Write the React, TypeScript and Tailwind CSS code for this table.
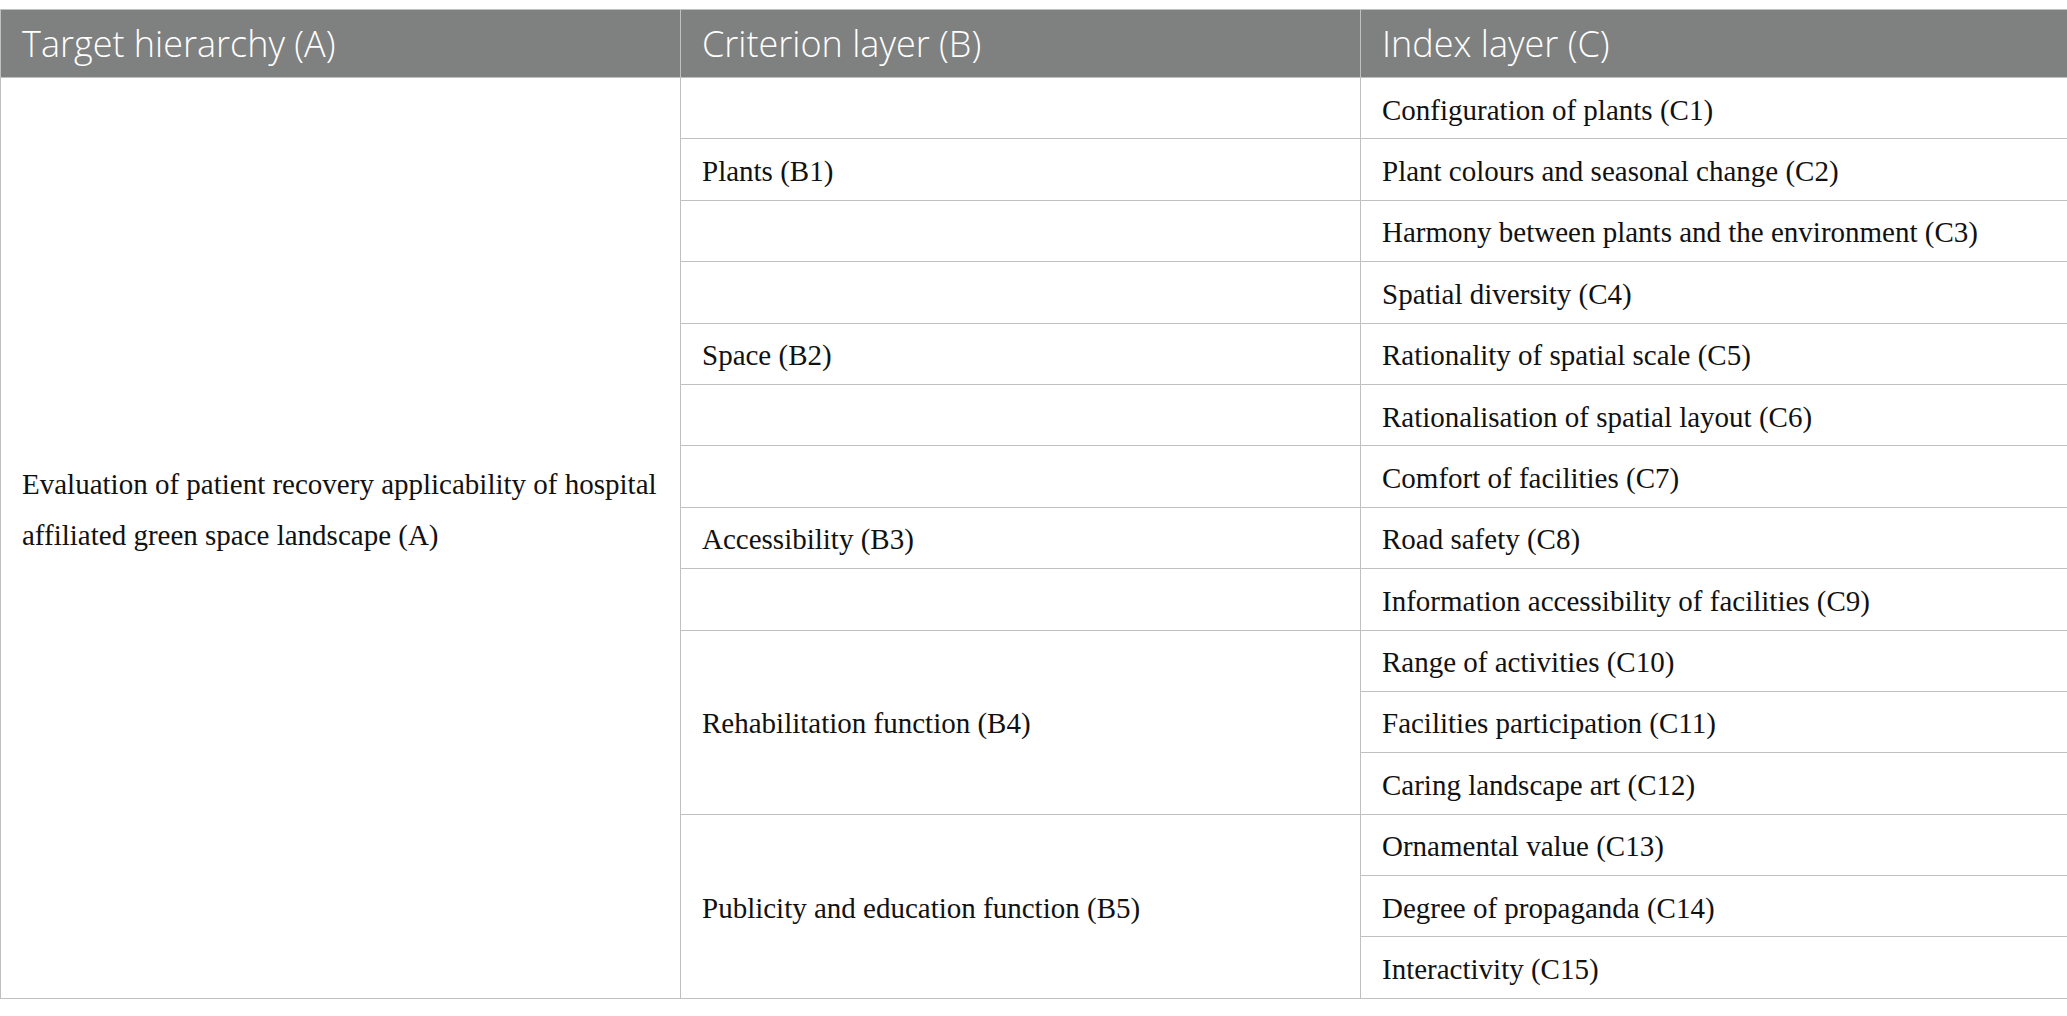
const rows: { b?: string; bSpan?: number; skipB?: boolean; c: string }[] = [
  { b: '', c: 'Configuration of plants (C1)' },
  { b: 'Plants (B1)', c: 'Plant colours and seasonal change (C2)' },
  { b: '', c: 'Harmony between plants and the environment (C3)' },
  { b: '', c: 'Spatial diversity (C4)' },
  { b: 'Space (B2)', c: 'Rationality of spatial scale (C5)' },
  { b: '', c: 'Rationalisation of spatial layout (C6)' },
  { b: '', c: 'Comfort of facilities (C7)' },
  { b: 'Accessibility (B3)', c: 'Road safety (C8)' },
  { b: '', c: 'Information accessibility of facilities (C9)' },
  { b: 'Rehabilitation function (B4)', bSpan: 3, c: 'Range of activities (C10)' },
  { skipB: true, c: 'Facilities participation (C11)' },
  { skipB: true, c: 'Caring landscape art (C12)' },
  { b: 'Publicity and education function (B5)', bSpan: 3, c: 'Ornamental value (C13)' },
  { skipB: true, c: 'Degree of propaganda (C14)' },
  { skipB: true, c: 'Interactivity (C15)' },
];

const serif = "font-['Liberation_Serif',_'Times_New_Roman',serif]";

export default function App() {
  return (
    <div className="min-h-screen bg-white pt-[9px]">
      <table className="w-[2067px] table-fixed border-collapse">
        <colgroup>
          <col className="w-[680px]" />
          <col className="w-[680px]" />
          <col className="w-[707px]" />
        </colgroup>
        <thead>
          <tr className="h-[68px] bg-[#7f8180] font-['Open_Sans',sans-serif] text-[36px] leading-none text-white">
            <th className="border border-[#bfc0bf] px-[21px] text-left font-light">Target hierarchy (A)</th>
            <th className="border border-[#bfc0bf] px-[21px] text-left font-light">Criterion layer (B)</th>
            <th className="border border-[#bfc0bf] px-[21px] text-left font-light">Index layer (C)</th>
          </tr>
        </thead>
        <tbody className={`${serif} text-[29px] text-[#111]`}>
          {rows.map((r, i) => (
            <tr key={i} className="h-[61.4px]">
              {i === 0 && (
                <td
                  rowSpan={15}
                  className="border border-[#bfc0bf] px-[21px] pb-[56px] align-middle leading-[51px]"
                >
                  Evaluation of patient recovery applicability of hospital affiliated green space landscape (A)
                </td>
              )}
              {!r.skipB && (
                <td rowSpan={r.bSpan ?? 1} className="border border-[#bfc0bf] px-[21px] pt-[3px] align-middle leading-tight">
                  {r.b}
                </td>
              )}
              <td className="border border-[#bfc0bf] px-[21px] pt-[3px] align-middle leading-tight">{r.c}</td>
            </tr>
          ))}
        </tbody>
      </table>
    </div>
  );
}
